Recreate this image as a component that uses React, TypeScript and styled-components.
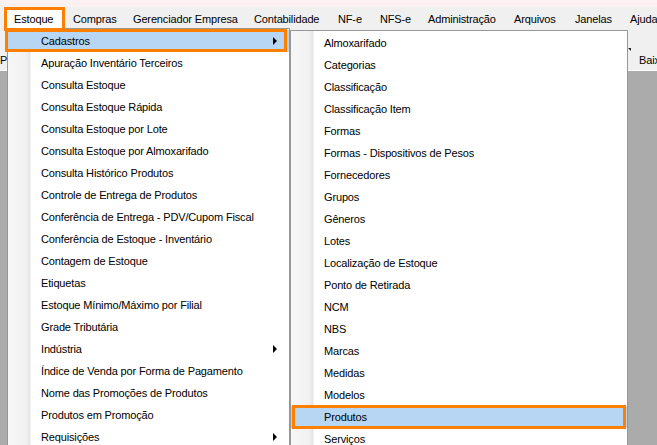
import React from "react";
import styled, { createGlobalStyle, css } from "styled-components";

const GlobalStyle = createGlobalStyle`
  html, body { margin: 0; padding: 0; background: #ababab; }
  body { font-family: "Liberation Sans", Arial, sans-serif; }
`;

const ORANGE = "#ff7f00";

const Screen = styled.div`
  position: relative;
  width: 657px;
  height: 445px;
  overflow: hidden;
  display: flex;
  flex-direction: column;
  font-family: "Liberation Sans", Arial, sans-serif;
  font-size: 11px;
  letter-spacing: -0.15px;
  color: #000;
  background: #ababab;
`;

const TitleStrip = styled.div`
  height: 7px;
  flex: none;
  background: #faf1f0;
`;

const MenuBar = styled.div`
  height: 23px;
  flex: none;
  display: flex;
  align-items: stretch;
  padding-left: 4px;
  background: #f0f0f0;
`;

const BarItem = styled.div<{ $w?: number; $active?: boolean }>`
  position: relative;
  flex: none;
  width: ${(p) => (p.$w ? `${p.$w}px` : "auto")};
  box-sizing: border-box;
  padding: 0 10px;
  display: flex;
  align-items: center;
  white-space: nowrap;
  ${(p) =>
    p.$active &&
    css`
      background: #fff;
      &::after {
        content: "";
        position: absolute;
        top: 0;
        left: 0;
        right: -2px;
        bottom: -1px;
        border: 3px solid ${ORANGE};
        z-index: 5;
      }
    `}
`;

const Toolbar = styled.div`
  height: 40px;
  flex: none;
  display: flex;
  align-items: flex-end;
  background: #f0f0f0;
  border-bottom: 1px solid #fcfcfc;
`;

const TabLabel = styled.div<{ $pad: number }>`
  height: 20px;
  flex: none;
  display: flex;
  align-items: center;
  padding-left: ${(p) => p.$pad}px;
  white-space: nowrap;
`;

const Spacer = styled.div`
  flex: 1;
`;

const TabEnd = styled.div`
  width: 30px;
  flex: none;
  align-self: stretch;
  display: flex;
  flex-direction: column;
  justify-content: flex-end;
  position: relative;
  overflow: hidden;
`;

const Caret = styled.div`
  position: absolute;
  left: 1px;
  top: 18px;
  width: 0;
  height: 0;
  border-left: 3px solid transparent;
  border-top: 3px solid #222;
`;

const MdiArea = styled.div`
  flex: 1;
  background: #ababab;
`;

const Dropdown = styled.div<{ $left: number; $top: number; $width: number; $padTop: number }>`
  position: absolute;
  left: ${(p) => p.$left}px;
  top: ${(p) => p.$top}px;
  width: ${(p) => p.$width}px;
  box-sizing: border-box;
  padding-top: ${(p) => p.$padTop}px;
  border: 1px solid #979797;
  background: linear-gradient(
    to right,
    #f7f7f7 0,
    #f1f1f1 18px,
    #e4e4e4 22px,
    #ffffff 23px
  );
  display: flex;
  flex-direction: column;
  z-index: 3;
`;

type Frame = { t: number; l: number; r: number; b: number };

const Item = styled.div<{ $hot?: boolean; $frame?: Frame }>`
  position: relative;
  height: 22px;
  flex: none;
  display: flex;
  align-items: center;
  padding-left: 33px;
  padding-right: 12px;
  white-space: nowrap;
  ${(p) =>
    p.$hot &&
    css`
      background: #b7d6f3;
    `}
  ${(p) =>
    p.$frame &&
    css`
      &::after {
        content: "";
        position: absolute;
        top: ${p.$frame.t}px;
        left: ${p.$frame.l}px;
        right: ${p.$frame.r}px;
        bottom: ${p.$frame.b}px;
        border: 3px solid ${ORANGE};
        z-index: 5;
      }
    `}
`;

const ItemText = styled.span`
  flex: 1;
`;

const SubArrow = styled.span`
  width: 0;
  height: 0;
  border-top: 4px solid transparent;
  border-bottom: 4px solid transparent;
  border-left: 4px solid #000;
`;

const barItems: { label: string; w?: number }[] = [
  { label: "Estoque", w: 59 },
  { label: "Compras", w: 60 },
  { label: "Gerenciador Empresa", w: 121 },
  { label: "Contabilidade", w: 84 },
  { label: "NF-e", w: 42 },
  { label: "NFS-e", w: 48 },
  { label: "Administração", w: 86 },
  { label: "Arquivos", w: 61 },
  { label: "Janelas", w: 55 },
  { label: "Ajuda" },
];

const estoqueItems: { label: string; sub?: boolean }[] = [
  { label: "Cadastros", sub: true },
  { label: "Apuração Inventário Terceiros" },
  { label: "Consulta Estoque" },
  { label: "Consulta Estoque Rápida" },
  { label: "Consulta Estoque por Lote" },
  { label: "Consulta Estoque por Almoxarifado" },
  { label: "Consulta Histórico Produtos" },
  { label: "Controle de Entrega de Produtos" },
  { label: "Conferência de Entrega - PDV/Cupom Fiscal" },
  { label: "Conferência de Estoque - Inventário" },
  { label: "Contagem de Estoque" },
  { label: "Etiquetas" },
  { label: "Estoque Mínimo/Máximo por Filial" },
  { label: "Grade Tributária" },
  { label: "Indústria", sub: true },
  { label: "Índice de Venda por Forma de Pagamento" },
  { label: "Nome das Promoções de Produtos" },
  { label: "Produtos em Promoção" },
  { label: "Requisições", sub: true },
];

const cadastroItems = [
  "Almoxarifado",
  "Categorias",
  "Classificação",
  "Classificação Item",
  "Formas",
  "Formas - Dispositivos de Pesos",
  "Fornecedores",
  "Grupos",
  "Gêneros",
  "Lotes",
  "Localização de Estoque",
  "Ponto de Retirada",
  "NCM",
  "NBS",
  "Marcas",
  "Medidas",
  "Modelos",
  "Produtos",
  "Serviços",
];

export default function App() {
  return (
    <>
      <GlobalStyle />
      <Screen>
        <TitleStrip />
        <MenuBar>
          {barItems.map((b) => (
            <BarItem key={b.label} $w={b.w} $active={b.label === "Estoque"}>
              {b.label}
            </BarItem>
          ))}
        </MenuBar>
        <Toolbar>
          <TabLabel $pad={0}>Produtos</TabLabel>
          <Spacer />
          <TabEnd>
            <Caret />
            <TabLabel $pad={12}>Baixa</TabLabel>
          </TabEnd>
        </Toolbar>
        <MdiArea />

        <Dropdown $left={7} $top={28} $width={283} $padTop={1}>
          {estoqueItems.map((it) => {
            const hot = it.label === "Cadastros";
            return (
              <Item
                key={it.label}
                $hot={hot}
                $frame={hot ? { t: -1, l: -3, r: 2, b: 0 } : undefined}
              >
                <ItemText>{it.label}</ItemText>
                {it.sub && <SubArrow />}
              </Item>
            );
          })}
        </Dropdown>

        <Dropdown $left={290} $top={30} $width={338} $padTop={1}>
          {cadastroItems.map((label) => {
            const hot = label === "Produtos";
            return (
              <Item
                key={label}
                $hot={hot}
                $frame={hot ? { t: -1, l: 1, r: 1, b: -1 } : undefined}
              >
                <ItemText>{label}</ItemText>
              </Item>
            );
          })}
        </Dropdown>
      </Screen>
    </>
  );
}
